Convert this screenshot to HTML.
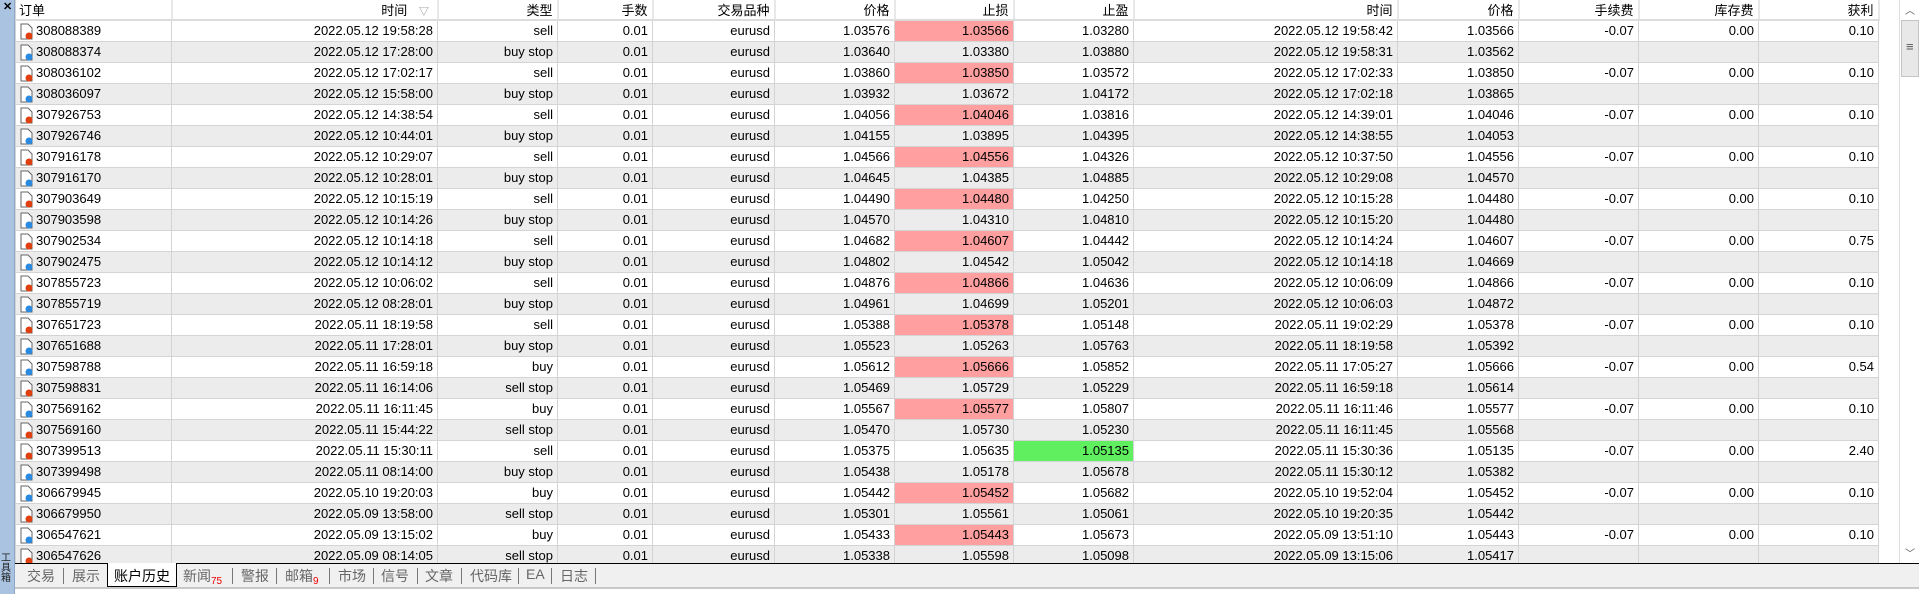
<!DOCTYPE html>
<html><head><meta charset="utf-8"><style>
*{margin:0;padding:0;box-sizing:border-box}
body{width:1919px;height:594px;overflow:hidden;background:#fff;font-family:"Liberation Sans","Noto Sans CJK SC",sans-serif;font-size:13px;color:#000;position:relative}
#strip{position:absolute;left:0;top:0;width:15px;height:594px;background:#a9c3e0;border-right:1px solid #8aa6c8}
#strip .x{position:absolute;top:0;left:3px;font-size:11px;font-weight:bold}
#strip .v{position:absolute;bottom:10px;left:1px;width:13px;font-size:10px;line-height:10px;color:#222}
table{position:absolute;left:15px;top:0;border-collapse:collapse;table-layout:fixed;width:1863px}
td,th{height:21px;border:1px solid #d4d4d4;border-top:none;text-align:right;padding:0 4px 0 2px;white-space:nowrap;overflow:hidden;font-weight:normal}
th{height:19px;border-bottom:2px solid #dcdcdc;border-right:2px solid #e8e8e8;background:#fff}
th:first-child,td:first-child{text-align:left;padding-left:20px;position:relative}
tr:nth-child(odd) td{background:#ececec}
td.p{background:#ff9f9f!important}
td.g{background:#5fef5f!important}
td:first-child svg{position:absolute;left:3px;top:2px}
#sb{position:absolute;left:1899px;top:0;width:20px;height:563px;background:#fff;border-left:1px solid #ddd}
#sb .th{position:absolute;left:1px;top:20px;width:18px;height:57px;background:#e8e8e8;border:1px solid #c4c4c4}
#sb .th:after{content:"≡";position:absolute;left:4px;top:18px;font-size:13px;color:#555}
#sb .u{position:absolute;top:2px;left:5px;font-size:10px;color:#555}
#sb .d{position:absolute;top:545px;left:5px;font-size:10px;color:#555}
#tabs{position:absolute;left:15px;top:563px;width:1904px;height:26px;background:#f0f0f0;border-top:1px solid #000;border-bottom:2px solid #c8c8c8}
#tabs span{position:absolute;top:2px;color:#666;font-size:14px}
#tabs i{position:absolute;top:4px;width:1px;height:16px;background:#777}
#tabs .a{top:-1px;height:24px;background:#fff;border:1px solid #000;border-top:none;color:#000;padding:3px 6px 0}
sub{color:#e00;font-size:10px;vertical-align:-3px}
</style></head><body>
<div id="strip"><span class="x">✕</span><div class="v">工具箱</div></div>
<table>
<colgroup><col style="width:156px"><col style="width:266px"><col style="width:120px"><col style="width:95px"><col style="width:122px"><col style="width:120px"><col style="width:119px"><col style="width:120px"><col style="width:264px"><col style="width:121px"><col style="width:120px"><col style="width:120px"><col style="width:120px"></colgroup>
<tr><th style="padding-left:3px">订单</th><th>时间 <span style="color:#888;font-size:10px;padding-left:8px">▽</span>&nbsp;</th><th>类型</th><th>手数</th><th>交易品种</th><th>价格</th><th>止损</th><th>止盈</th><th>时间</th><th>价格</th><th>手续费</th><th>库存费</th><th>获利</th></tr>
<tr><td><svg width="15" height="17"><path d="M2 1h7l4 4v11H2z" fill="#fff" stroke="#666"/><circle cx="10" cy="13" r="3.5" fill="#e04010"/></svg>308088389</td><td>2022.05.12 19:58:28</td><td>sell</td><td>0.01</td><td>eurusd</td><td>1.03576</td><td class="p">1.03566</td><td>1.03280</td><td>2022.05.12 19:58:42</td><td>1.03566</td><td>-0.07</td><td>0.00</td><td>0.10</td></tr>
<tr><td><svg width="15" height="17"><path d="M2 1h7l4 4v11H2z" fill="#fff" stroke="#666"/><circle cx="10" cy="13" r="3.5" fill="#2a8ae0"/></svg>308088374</td><td>2022.05.12 17:28:00</td><td>buy stop</td><td>0.01</td><td>eurusd</td><td>1.03640</td><td>1.03380</td><td>1.03880</td><td>2022.05.12 19:58:31</td><td>1.03562</td><td></td><td></td><td></td></tr>
<tr><td><svg width="15" height="17"><path d="M2 1h7l4 4v11H2z" fill="#fff" stroke="#666"/><circle cx="10" cy="13" r="3.5" fill="#e04010"/></svg>308036102</td><td>2022.05.12 17:02:17</td><td>sell</td><td>0.01</td><td>eurusd</td><td>1.03860</td><td class="p">1.03850</td><td>1.03572</td><td>2022.05.12 17:02:33</td><td>1.03850</td><td>-0.07</td><td>0.00</td><td>0.10</td></tr>
<tr><td><svg width="15" height="17"><path d="M2 1h7l4 4v11H2z" fill="#fff" stroke="#666"/><circle cx="10" cy="13" r="3.5" fill="#2a8ae0"/></svg>308036097</td><td>2022.05.12 15:58:00</td><td>buy stop</td><td>0.01</td><td>eurusd</td><td>1.03932</td><td>1.03672</td><td>1.04172</td><td>2022.05.12 17:02:18</td><td>1.03865</td><td></td><td></td><td></td></tr>
<tr><td><svg width="15" height="17"><path d="M2 1h7l4 4v11H2z" fill="#fff" stroke="#666"/><circle cx="10" cy="13" r="3.5" fill="#e04010"/></svg>307926753</td><td>2022.05.12 14:38:54</td><td>sell</td><td>0.01</td><td>eurusd</td><td>1.04056</td><td class="p">1.04046</td><td>1.03816</td><td>2022.05.12 14:39:01</td><td>1.04046</td><td>-0.07</td><td>0.00</td><td>0.10</td></tr>
<tr><td><svg width="15" height="17"><path d="M2 1h7l4 4v11H2z" fill="#fff" stroke="#666"/><circle cx="10" cy="13" r="3.5" fill="#2a8ae0"/></svg>307926746</td><td>2022.05.12 10:44:01</td><td>buy stop</td><td>0.01</td><td>eurusd</td><td>1.04155</td><td>1.03895</td><td>1.04395</td><td>2022.05.12 14:38:55</td><td>1.04053</td><td></td><td></td><td></td></tr>
<tr><td><svg width="15" height="17"><path d="M2 1h7l4 4v11H2z" fill="#fff" stroke="#666"/><circle cx="10" cy="13" r="3.5" fill="#e04010"/></svg>307916178</td><td>2022.05.12 10:29:07</td><td>sell</td><td>0.01</td><td>eurusd</td><td>1.04566</td><td class="p">1.04556</td><td>1.04326</td><td>2022.05.12 10:37:50</td><td>1.04556</td><td>-0.07</td><td>0.00</td><td>0.10</td></tr>
<tr><td><svg width="15" height="17"><path d="M2 1h7l4 4v11H2z" fill="#fff" stroke="#666"/><circle cx="10" cy="13" r="3.5" fill="#2a8ae0"/></svg>307916170</td><td>2022.05.12 10:28:01</td><td>buy stop</td><td>0.01</td><td>eurusd</td><td>1.04645</td><td>1.04385</td><td>1.04885</td><td>2022.05.12 10:29:08</td><td>1.04570</td><td></td><td></td><td></td></tr>
<tr><td><svg width="15" height="17"><path d="M2 1h7l4 4v11H2z" fill="#fff" stroke="#666"/><circle cx="10" cy="13" r="3.5" fill="#e04010"/></svg>307903649</td><td>2022.05.12 10:15:19</td><td>sell</td><td>0.01</td><td>eurusd</td><td>1.04490</td><td class="p">1.04480</td><td>1.04250</td><td>2022.05.12 10:15:28</td><td>1.04480</td><td>-0.07</td><td>0.00</td><td>0.10</td></tr>
<tr><td><svg width="15" height="17"><path d="M2 1h7l4 4v11H2z" fill="#fff" stroke="#666"/><circle cx="10" cy="13" r="3.5" fill="#2a8ae0"/></svg>307903598</td><td>2022.05.12 10:14:26</td><td>buy stop</td><td>0.01</td><td>eurusd</td><td>1.04570</td><td>1.04310</td><td>1.04810</td><td>2022.05.12 10:15:20</td><td>1.04480</td><td></td><td></td><td></td></tr>
<tr><td><svg width="15" height="17"><path d="M2 1h7l4 4v11H2z" fill="#fff" stroke="#666"/><circle cx="10" cy="13" r="3.5" fill="#e04010"/></svg>307902534</td><td>2022.05.12 10:14:18</td><td>sell</td><td>0.01</td><td>eurusd</td><td>1.04682</td><td class="p">1.04607</td><td>1.04442</td><td>2022.05.12 10:14:24</td><td>1.04607</td><td>-0.07</td><td>0.00</td><td>0.75</td></tr>
<tr><td><svg width="15" height="17"><path d="M2 1h7l4 4v11H2z" fill="#fff" stroke="#666"/><circle cx="10" cy="13" r="3.5" fill="#2a8ae0"/></svg>307902475</td><td>2022.05.12 10:14:12</td><td>buy stop</td><td>0.01</td><td>eurusd</td><td>1.04802</td><td>1.04542</td><td>1.05042</td><td>2022.05.12 10:14:18</td><td>1.04669</td><td></td><td></td><td></td></tr>
<tr><td><svg width="15" height="17"><path d="M2 1h7l4 4v11H2z" fill="#fff" stroke="#666"/><circle cx="10" cy="13" r="3.5" fill="#e04010"/></svg>307855723</td><td>2022.05.12 10:06:02</td><td>sell</td><td>0.01</td><td>eurusd</td><td>1.04876</td><td class="p">1.04866</td><td>1.04636</td><td>2022.05.12 10:06:09</td><td>1.04866</td><td>-0.07</td><td>0.00</td><td>0.10</td></tr>
<tr><td><svg width="15" height="17"><path d="M2 1h7l4 4v11H2z" fill="#fff" stroke="#666"/><circle cx="10" cy="13" r="3.5" fill="#2a8ae0"/></svg>307855719</td><td>2022.05.12 08:28:01</td><td>buy stop</td><td>0.01</td><td>eurusd</td><td>1.04961</td><td>1.04699</td><td>1.05201</td><td>2022.05.12 10:06:03</td><td>1.04872</td><td></td><td></td><td></td></tr>
<tr><td><svg width="15" height="17"><path d="M2 1h7l4 4v11H2z" fill="#fff" stroke="#666"/><circle cx="10" cy="13" r="3.5" fill="#e04010"/></svg>307651723</td><td>2022.05.11 18:19:58</td><td>sell</td><td>0.01</td><td>eurusd</td><td>1.05388</td><td class="p">1.05378</td><td>1.05148</td><td>2022.05.11 19:02:29</td><td>1.05378</td><td>-0.07</td><td>0.00</td><td>0.10</td></tr>
<tr><td><svg width="15" height="17"><path d="M2 1h7l4 4v11H2z" fill="#fff" stroke="#666"/><circle cx="10" cy="13" r="3.5" fill="#2a8ae0"/></svg>307651688</td><td>2022.05.11 17:28:01</td><td>buy stop</td><td>0.01</td><td>eurusd</td><td>1.05523</td><td>1.05263</td><td>1.05763</td><td>2022.05.11 18:19:58</td><td>1.05392</td><td></td><td></td><td></td></tr>
<tr><td><svg width="15" height="17"><path d="M2 1h7l4 4v11H2z" fill="#fff" stroke="#666"/><circle cx="10" cy="13" r="3.5" fill="#2a8ae0"/></svg>307598788</td><td>2022.05.11 16:59:18</td><td>buy</td><td>0.01</td><td>eurusd</td><td>1.05612</td><td class="p">1.05666</td><td>1.05852</td><td>2022.05.11 17:05:27</td><td>1.05666</td><td>-0.07</td><td>0.00</td><td>0.54</td></tr>
<tr><td><svg width="15" height="17"><path d="M2 1h7l4 4v11H2z" fill="#fff" stroke="#666"/><circle cx="10" cy="13" r="3.5" fill="#e04010"/></svg>307598831</td><td>2022.05.11 16:14:06</td><td>sell stop</td><td>0.01</td><td>eurusd</td><td>1.05469</td><td>1.05729</td><td>1.05229</td><td>2022.05.11 16:59:18</td><td>1.05614</td><td></td><td></td><td></td></tr>
<tr><td><svg width="15" height="17"><path d="M2 1h7l4 4v11H2z" fill="#fff" stroke="#666"/><circle cx="10" cy="13" r="3.5" fill="#2a8ae0"/></svg>307569162</td><td>2022.05.11 16:11:45</td><td>buy</td><td>0.01</td><td>eurusd</td><td>1.05567</td><td class="p">1.05577</td><td>1.05807</td><td>2022.05.11 16:11:46</td><td>1.05577</td><td>-0.07</td><td>0.00</td><td>0.10</td></tr>
<tr><td><svg width="15" height="17"><path d="M2 1h7l4 4v11H2z" fill="#fff" stroke="#666"/><circle cx="10" cy="13" r="3.5" fill="#e04010"/></svg>307569160</td><td>2022.05.11 15:44:22</td><td>sell stop</td><td>0.01</td><td>eurusd</td><td>1.05470</td><td>1.05730</td><td>1.05230</td><td>2022.05.11 16:11:45</td><td>1.05568</td><td></td><td></td><td></td></tr>
<tr><td><svg width="15" height="17"><path d="M2 1h7l4 4v11H2z" fill="#fff" stroke="#666"/><circle cx="10" cy="13" r="3.5" fill="#e04010"/></svg>307399513</td><td>2022.05.11 15:30:11</td><td>sell</td><td>0.01</td><td>eurusd</td><td>1.05375</td><td>1.05635</td><td class="g">1.05135</td><td>2022.05.11 15:30:36</td><td>1.05135</td><td>-0.07</td><td>0.00</td><td>2.40</td></tr>
<tr><td><svg width="15" height="17"><path d="M2 1h7l4 4v11H2z" fill="#fff" stroke="#666"/><circle cx="10" cy="13" r="3.5" fill="#2a8ae0"/></svg>307399498</td><td>2022.05.11 08:14:00</td><td>buy stop</td><td>0.01</td><td>eurusd</td><td>1.05438</td><td>1.05178</td><td>1.05678</td><td>2022.05.11 15:30:12</td><td>1.05382</td><td></td><td></td><td></td></tr>
<tr><td><svg width="15" height="17"><path d="M2 1h7l4 4v11H2z" fill="#fff" stroke="#666"/><circle cx="10" cy="13" r="3.5" fill="#2a8ae0"/></svg>306679945</td><td>2022.05.10 19:20:03</td><td>buy</td><td>0.01</td><td>eurusd</td><td>1.05442</td><td class="p">1.05452</td><td>1.05682</td><td>2022.05.10 19:52:04</td><td>1.05452</td><td>-0.07</td><td>0.00</td><td>0.10</td></tr>
<tr><td><svg width="15" height="17"><path d="M2 1h7l4 4v11H2z" fill="#fff" stroke="#666"/><circle cx="10" cy="13" r="3.5" fill="#e04010"/></svg>306679950</td><td>2022.05.09 13:58:00</td><td>sell stop</td><td>0.01</td><td>eurusd</td><td>1.05301</td><td>1.05561</td><td>1.05061</td><td>2022.05.10 19:20:35</td><td>1.05442</td><td></td><td></td><td></td></tr>
<tr><td><svg width="15" height="17"><path d="M2 1h7l4 4v11H2z" fill="#fff" stroke="#666"/><circle cx="10" cy="13" r="3.5" fill="#2a8ae0"/></svg>306547621</td><td>2022.05.09 13:15:02</td><td>buy</td><td>0.01</td><td>eurusd</td><td>1.05433</td><td class="p">1.05443</td><td>1.05673</td><td>2022.05.09 13:51:10</td><td>1.05443</td><td>-0.07</td><td>0.00</td><td>0.10</td></tr>
<tr><td><svg width="15" height="17"><path d="M2 1h7l4 4v11H2z" fill="#fff" stroke="#666"/><circle cx="10" cy="13" r="3.5" fill="#e04010"/></svg>306547626</td><td>2022.05.09 08:14:05</td><td>sell stop</td><td>0.01</td><td>eurusd</td><td>1.05338</td><td>1.05598</td><td>1.05098</td><td>2022.05.09 13:15:06</td><td>1.05417</td><td></td><td></td><td></td></tr>
</table>
<div id="sb"><span class="u">︿</span><div class="th"></div><span class="d">﹀</span></div>
<div id="tabs">
<span style="left:12px">交易</span><i style="left:48px"></i>
<span style="left:57px">展示</span>
<span class="a" style="left:92px">账户历史</span>
<span style="left:168px">新闻<sub>75</sub></span><i style="left:217px"></i>
<span style="left:226px">警报</span><i style="left:261px"></i>
<span style="left:270px">邮箱<sub>9</sub></span><i style="left:314px"></i>
<span style="left:323px">市场</span><i style="left:358px"></i>
<span style="left:366px">信号</span><i style="left:402px"></i>
<span style="left:410px">文章</span><i style="left:446px"></i>
<span style="left:455px">代码库</span><i style="left:503px"></i>
<span style="left:511px">EA</span><i style="left:536px"></i>
<span style="left:545px">日志</span><i style="left:580px"></i>
</div>
</body></html>
